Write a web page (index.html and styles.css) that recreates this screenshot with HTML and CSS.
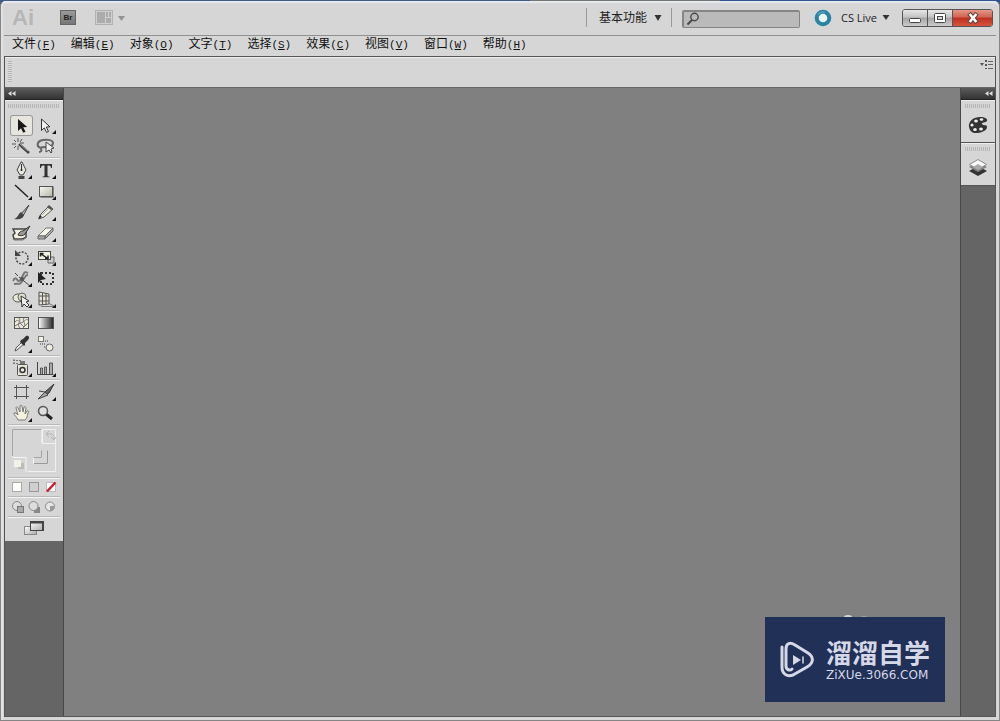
FILE: index.html
```html
<!DOCTYPE html>
<html lang="zh-CN">
<head>
<meta charset="utf-8">
<title>Ai</title>
<link rel="stylesheet" href="styles.css">
</head>
<body>
<div class="desktop">
<div class="window">
  <header class="titlebar">
    <span class="app-name">Ai</span>
    <button class="bridge" type="button" aria-label="Bridge">Br</button>
    <button class="arrange" type="button" aria-label="排列文档">
      <svg width="32" height="16" viewBox="0 0 32 16"><rect x=".5" y=".5" width="17" height="14" fill="#cfcfcf" stroke="#b2b2b2"/><path d="M2 2h8v11H2zM11 2h2v5h-2zM14 2h2v5h-2zM11 8h5v5h-5z" fill="#acacac"/><path d="M23 6h7l-3.500 5z" fill="#939393"/></svg>
    </button>
    <div class="title-right">
      <label class="workspace">
        <select aria-label="工作区"><option>基本功能</option></select>
        <svg width="8" height="6" viewBox="0 0 8 6"><path d="M.5 0h7L4 6z" fill="#333"/></svg>
      </label>
      <label class="search">
        <svg width="14" height="14" viewBox="0 0 14 14" fill="none" stroke="#484848"><circle cx="8.500" cy="5" r="3.700" stroke-width="1.400"/><path d="M6 8L1.500 12.500" stroke-width="2"/></svg>
        <input type="search" aria-label="搜索">
      </label>
      <button class="cslive" type="button">
        <svg width="18" height="18" viewBox="0 0 18 18"><circle cx="9" cy="9" r="6.300" fill="#edf3f5" stroke="#2883a5" stroke-width="4"/><path d="M4 5.500A6 6 0 0 1 11 3.500" fill="none" stroke="#58a6bf" stroke-width="1.500"/></svg>
        <span>CS Live</span>
        <svg width="8" height="5" viewBox="0 0 8 5"><path d="M.5 0h7L4 5z" fill="#333"/></svg>
      </button>
      <div class="controls">
        <button type="button" aria-label="最小化"><svg width="14" height="12" viewBox="0 0 14 12"><rect x="1.500" y="6.500" width="11" height="4" rx="1" fill="#fff" stroke="#444"/></svg></button>
        <button type="button" aria-label="还原"><svg width="14" height="12" viewBox="0 0 14 12"><rect x="1.500" y="1.500" width="11" height="9" rx="1" fill="#fff" stroke="#444"/><rect x="4.500" y="4.500" width="5" height="3" fill="#ddd" stroke="#444"/></svg></button>
        <button class="close" type="button" aria-label="关闭"><svg width="14" height="12" viewBox="0 0 14 12"><path d="M4.500 3l5 6M9.500 3l-5 6" stroke="#674441" stroke-width="4.600" stroke-linecap="square"/><path d="M4.500 3l5 6M9.500 3l-5 6" stroke="#fff" stroke-width="2.600" stroke-linecap="square"/></svg></button>
      </div>
    </div>
  </header>
  <nav class="menubar">
    <button type="button">文件<span>(<u>F</u>)</span></button>
    <button type="button">编辑<span>(<u>E</u>)</span></button>
    <button type="button">对象<span>(<u>O</u>)</span></button>
    <button type="button">文字<span>(<u>T</u>)</span></button>
    <button type="button">选择<span>(<u>S</u>)</span></button>
    <button type="button">效果<span>(<u>C</u>)</span></button>
    <button type="button">视图<span>(<u>V</u>)</span></button>
    <button type="button">窗口<span>(<u>W</u>)</span></button>
    <button type="button">帮助<span>(<u>H</u>)</span></button>
  </nav>
  <div class="client">
    <div class="control-panel">
      <span class="grip-v"></span>
      <button type="button" aria-label="面板菜单"><svg width="14" height="10" viewBox="0 0 14 10"><path d="M0 3h4L2 6zM5 0h2v2H5zM5 4h2v2H5zM5 8h2v1H5z" fill="#555"/><path d="M8 1.500h5M8 4.500h5M8 8.500h5" stroke="#666"/></svg></button>
    </div>
    <div class="workarea">
      <aside class="dock left">
        <button class="collapse" type="button" aria-label="折叠"><svg width="8" height="5" viewBox="0 0 8 5"><path d="M3.500 0v5L0 2.500zM7.500 0v5L4 2.500z" fill="#ddd"/></svg></button>
        <div class="tools">
          <div class="grip-h"></div>
          <div class="group first">
            <button class="tool selected" type="button" aria-label="选择"><svg viewBox="0 0 24 21"><path d="M8 4v12l3-2.800 2.300 4.600 2.200-1-2.300-4.600 4-.2z" fill="#181818"/></svg></button>
            <button class="tool more" type="button" aria-label="直接选择"><svg viewBox="0 0 24 21"><path d="M7.500 4v11.500l2.800-2.600 2.300 4.500 1.900-.9-2.200-4.500 3.600-.2z" fill="#f2f2f2" stroke="#333"/></svg></button>
            <button class="tool" type="button" aria-label="魔棒"><svg viewBox="0 0 24 21"><path d="M9 8l10 9" stroke="#444" stroke-width="2.600"/><path d="M9 7l9 8" stroke="#aaa"/><path d="M8 2v4M8 10v4M2 8h4M10 7h4M4 4l2 2M12 3l-2 3M4 12l2-2" stroke="#555"/></svg></button>
            <button class="tool" type="button" aria-label="套索"><svg viewBox="0 0 24 21"><path d="M7 12c-5-1-4-6 0-7.500 4-1.500 12-1 12 2.500 0 3-4 4-7 4s-6 0-5 2c1 2 0 3-2 3" fill="none" stroke="#666" stroke-width="2"/><path d="M12 6v10l3-2 2 3 1-1-1-3 3-1z" fill="#eee" stroke="#444"/></svg></button>
          </div>
          <div class="group">
            <button class="tool more" type="button" aria-label="钢笔"><svg viewBox="0 0 24 21"><path d="M11 2l-4 8 3 5h3l3-5-4-8z" fill="#e5e5dd" stroke="#444"/><path d="M11.500 4v6" stroke="#333"/><circle cx="11.500" cy="10" r="1" fill="#222"/><path d="M8.500 16h6v3h-6z" fill="#444"/></svg></button>
            <button class="tool more" type="button" aria-label="文字"><svg viewBox="0 0 24 21"><path d="M6 4h12v4h-1c0-2-1-2.500-3.500-2.500V15c0 1 .5 1.500 2 1.500v.8h-7v-.8c1.500 0 2-.5 2-1.500V5.500C8 5.500 7 6 7 8H6z" fill="#333"/></svg></button>
            <button class="tool more" type="button" aria-label="直线段"><svg viewBox="0 0 24 21"><path d="M5 4l13 12" stroke="#222" stroke-width="1.500"/></svg></button>
            <button class="tool more" type="button" aria-label="矩形"><svg viewBox="0 0 24 21"><path d="M6.500 16.500h13v-11" fill="none" stroke="#888"/><rect x="5.500" y="5.500" width="13" height="10" fill="url(#cream)" stroke="#555"/></svg></button>
            <button class="tool" type="button" aria-label="画笔"><svg viewBox="0 0 24 21"><path d="M11 12l8-9-6 11z" fill="#bbb" stroke="#444"/><path d="M11 10l3 3c-1 4-5 5-10 4 4-1 4-5 7-7z" fill="#444"/></svg></button>
            <button class="tool more" type="button" aria-label="铅笔"><svg viewBox="0 0 24 21"><path d="M5 17l2-5 8-8 4 3-9 8z" fill="#efeddc" stroke="#555"/><path d="M4 17l2-4 2 2z" fill="#222"/><path d="M15 3l4 4-2 1-4-3z" fill="#555"/><path d="M8 13l7-7" stroke="#aaa"/></svg></button>
            <button class="tool" type="button" aria-label="斑点画笔"><svg viewBox="0 0 24 21"><path d="M3 6h13v8c-3 3-7 2-12 2l-1-4 2-2z" fill="#f2f0de" stroke="#444" stroke-width="1.500"/><path d="M8 12c1-3 3-4 5-4l7-5-5 8c-2 2-4 2-7 1z" fill="#999" stroke="#333"/><path d="M4 17h9l4-3" fill="none" stroke="#777"/></svg></button>
            <button class="tool more" type="button" aria-label="橡皮擦"><svg viewBox="0 0 24 21"><path d="M4 13l8-8h7l-8 8z" fill="#f4f4e8" stroke="#777"/><path d="M4 13h7v3H4zM11 13l8-8v3l-8 8z" fill="#aaa" stroke="#666"/></svg></button>
          </div>
          <div class="group">
            <button class="tool more" type="button" aria-label="旋转"><svg viewBox="0 0 24 21"><circle cx="12" cy="11" r="6" fill="none" stroke="#444" stroke-width="1.400" stroke-dasharray="2 1.400"/><path d="M5 3v6h6z" fill="#444"/></svg></button>
            <button class="tool more" type="button" aria-label="比例缩放"><svg viewBox="0 0 24 21"><path d="M14 10h6v6h-6z" fill="#ccc" stroke="#666"/><rect x="4.500" y="4.500" width="12" height="8" fill="#f3f1df" stroke="#444"/><path d="M7 7l6 4M6.500 9.500v-3h3M11 11.500h3v-3" stroke="#222" fill="none" stroke-width="1.500"/></svg></button>
            <button class="tool more" type="button" aria-label="宽度"><svg viewBox="0 0 24 21"><path d="M3 13c4-8 4 5 8-2s3-8 7-6M4 16c6-1 5 2 9-4s3-5 5-5" stroke="#777" fill="none" stroke-width="2"/><path d="M9 9l11 9M5 5l3 3" stroke="#444"/><circle cx="12" cy="11" r="2" fill="#555"/></svg></button>
            <button class="tool" type="button" aria-label="自由变换"><svg viewBox="0 0 24 21"><rect x="7" y="5" width="12" height="11" fill="none" stroke="#333" stroke-width="2" stroke-dasharray="2 2"/><path d="M4 4v11l3-3 5-1z" fill="#222"/></svg></button>
            <button class="tool more" type="button" aria-label="形状生成器"><svg viewBox="0 0 24 21"><ellipse cx="8" cy="9" rx="5" ry="4" fill="#e8e8da" stroke="#555"/><circle cx="12" cy="8" r="4" fill="#ddddcf" stroke="#666"/><path d="M11 7l1 11 2-3 3 3 2-2-3-3 3-1z" fill="#eee" stroke="#333"/></svg></button>
            <button class="tool more" type="button" aria-label="透视网格"><svg viewBox="0 0 24 21"><path d="M5 3l10 2v10L5 16zM5 7h10M5 12h10M8.500 4v12M12 4v12" fill="#e6e3ce" stroke="#555"/><path d="M7 17.500h13M14 14l6 3" stroke="#777"/></svg></button>
          </div>
          <div class="group">
            <button class="tool" type="button" aria-label="网格"><svg viewBox="0 0 24 21"><rect x="4.500" y="4.500" width="14" height="11" fill="#edead6" stroke="#555"/><path d="M5 9c4-5 4 3 8 0s3-3 5-2M9 5c3 3-3 6 1 10M14 5c-3 3 4 6-1 10M5 13l5-3 4 4 4-4" fill="none" stroke="#777"/></svg></button>
            <button class="tool" type="button" aria-label="渐变"><svg viewBox="0 0 24 21"><rect x="4.500" y="4.500" width="15" height="11" fill="url(#ramp)" stroke="#555"/></svg></button>
            <button class="tool more" type="button" aria-label="吸管"><svg viewBox="0 0 24 21"><path d="M5 17l1-3 7-7 2 2-8 7z" fill="#eee" stroke="#555"/><path d="M11 6l2-1 3-3c3-1 4 2 2 4l-3 3 0 2-1 1-4-4z" fill="#333"/></svg></button>
            <button class="tool" type="button" aria-label="混合"><svg viewBox="0 0 24 21"><rect x="4.500" y="2.500" width="5" height="5" fill="#f3f1df" stroke="#777"/><circle cx="15.500" cy="13.500" r="3.500" fill="#f0eee0" stroke="#666"/><path d="M6 10h6M10 13h3M11 7h4" stroke="#888" stroke-width="2" stroke-dasharray="1 1"/></svg></button>
          </div>
          <div class="group">
            <button class="tool more" type="button" aria-label="符号喷枪"><svg viewBox="0 0 24 21"><path d="M3 2.500h8M3 5.500h5M4 1v6" stroke="#777" stroke-dasharray="2 1"/><path d="M10 3h5v3h-5z" fill="#777"/><rect x="7.500" y="6.500" width="10" height="11" rx="1" fill="#e6e4d6" stroke="#555"/><circle cx="12.500" cy="12" r="2.500" fill="#eee" stroke="#333" stroke-width="1.500"/></svg></button>
            <button class="tool more" type="button" aria-label="柱形图"><svg viewBox="0 0 24 21"><path d="M3.500 4v12.500h16" fill="none" stroke="#444"/><path d="M6.500 16v-6h2v6M10.500 16V9h2v7M15.500 16V5h3v11" fill="#aaa" stroke="#555"/></svg></button>
          </div>
          <div class="group">
            <button class="tool" type="button" aria-label="画板"><svg viewBox="0 0 24 21"><path d="M6.500 3v14M16.500 3v14M4 5.500h15M4 14.500h15" stroke="#555"/></svg></button>
            <button class="tool more" type="button" aria-label="切片"><svg viewBox="0 0 24 21"><path d="M11 10l9-8-5 9-2 1z" fill="#666" stroke="#333"/><path d="M4 17l7-7 3 3z" fill="#aaa" stroke="#444"/><path d="M5 9l6 1" stroke="#444"/></svg></button>
            <button class="tool more" type="button" aria-label="抓手"><svg viewBox="0 0 24 21"><path d="M8 17c-1-3-5-6-4-7s3 1 4 2L6 5c0-2 2-1 2 0l2 4V3c0-1 2-1 2 0l1 6 1-5c1-1 2 0 2 1l-1 6 2-3c2-1 2 1 1 2-1 4-1 5-3 7z" fill="#f4f1df" stroke="#777"/></svg></button>
            <button class="tool" type="button" aria-label="缩放"><svg viewBox="0 0 24 21"><path d="M12 11l6 5" stroke="#222" stroke-width="3"/><circle cx="9" cy="8" r="4.500" fill="#dedede" stroke="#555" stroke-width="1.500"/></svg></button>
          </div>
          <div class="group swatch">
            <svg width="46" height="45" viewBox="0 0 46 45"><path d="M1.500 1.500h43v42h-28M1.500 29V1.500h30v14h13" fill="none" stroke="#f0f0f0"/><path d="M1.500 28V1.500h29M30.500 22.500v7h-8" fill="none" stroke="#a5a5a5"/><path d="M36.500 22.500v13h-14v-6M2 29.500h13v14M31 2v13" fill="none" stroke="#f5f5f5"/><path d="M36.500 22.500v13H23" fill="none" stroke="#999"/><path d="M36 6h3c3 0 4 1 4 5M38 3l-3 3 3 3M40 9l3 3 2-3" fill="none" stroke="#b5b5b5"/><path d="M7 35h6v6H7z" fill="#bbb"/><path d="M3 32h7v7H3z" fill="#f4f2e6"/></svg>
          </div>
          <div class="group modes">
            <button type="button" aria-label="颜色"><svg width="11" height="11" viewBox="0 0 11 11"><rect x=".5" y=".5" width="9" height="9" fill="#fffffa" stroke="#aaa"/></svg></button>
            <button type="button" aria-label="渐变填色"><svg width="11" height="11" viewBox="0 0 11 11"><rect x=".5" y=".5" width="9" height="9" fill="#cfcfcf" stroke="#999"/></svg></button>
            <button type="button" aria-label="无"><svg width="11" height="11" viewBox="0 0 11 11"><rect x=".5" y=".5" width="9" height="9" fill="#fff" stroke="#bbb"/><path d="M1 9.500l8.500-9" stroke="#c81f32" stroke-width="2.500"/></svg></button>
          </div>
          <div class="group modes">
            <button type="button" aria-label="正常绘图"><svg width="13" height="12" viewBox="0 0 13 12"><circle cx="5" cy="5" r="4.500" fill="#ddd" stroke="#888"/><rect x="5.500" y="5.500" width="6" height="6" fill="#aaa" stroke="#777"/></svg></button>
            <button type="button" aria-label="背面绘图"><svg width="13" height="12" viewBox="0 0 13 12"><path d="M6 6h6v6H6z" fill="#888"/><circle cx="5.500" cy="5" r="4.500" fill="#ddd" stroke="#888"/></svg></button>
            <button type="button" aria-label="内部绘图"><svg width="13" height="12" viewBox="0 0 13 12"><circle cx="6" cy="5.500" r="4.500" fill="#e5e5e5" stroke="#888"/><path d="M6 5h4v3l-2 2H6z" fill="#999"/></svg></button>
          </div>
          <div class="group screen">
            <button type="button" aria-label="屏幕模式"><svg width="22" height="17" viewBox="0 0 22 17"><rect x="1.500" y="6.500" width="12" height="8" fill="url(#grey)" stroke="#888"/><rect x="7.500" y="1.500" width="13" height="9" fill="url(#grey)" stroke="#444"/><path d="M8 2.500h12M20 2v9" stroke="#444" stroke-width="2"/></svg></button>
          </div>
        </div>
      </aside>
      <main class="canvas"></main>
      <aside class="dock right">
        <button class="collapse" type="button" aria-label="展开面板"><svg width="8" height="5" viewBox="0 0 8 5"><path d="M3.500 0v5L0 2.500zM7.500 0v5L4 2.500z" fill="#ddd"/></svg></button>
        <div class="panel-tab"><div class="grip-h"></div><button type="button" aria-label="颜色面板"><svg width="20" height="18" viewBox="0 0 20 18"><path d="M1 11C0 5 6 1 12 1c5 0 8 2 7 4-1 2-6 1-5 3s5 0 5 3c0 4-7 6-11 6-4 0-6-2-7-6z" fill="#333"/><ellipse cx="8" cy="5" rx="1.900" ry="1.500" fill="#eee"/><ellipse cx="13.500" cy="3.500" rx="1.800" ry="1.300" fill="#eee"/><ellipse cx="4" cy="9" rx="1.600" ry="1.500" fill="#eee"/><ellipse cx="7" cy="13.500" rx="1.800" ry="1.500" fill="#eee"/><ellipse cx="13" cy="13" rx="1.900" ry="1.500" fill="#eee"/></svg></button></div>
        <div class="panel-tab"><div class="grip-h"></div><button type="button" aria-label="图层面板"><svg width="20" height="18" viewBox="0 0 20 18"><path d="M1 12l9-5 9 5-9 5z" fill="#333"/><path d="M1 8l9-5 9 5-9 5z" fill="#858585"/><path d="M1.500 5.500l8.500-5 8.500 5-8.500 5z" fill="#f8f8f8" stroke="#888"/><path d="M5 8l5-3 5 3-5 3z" fill="#aaa"/></svg></button></div>
      </aside>
    </div>
  </div>
</div>
<div class="watermark">
  <svg class="specks" width="26" height="4" viewBox="0 0 26 4"><ellipse cx="6" cy="4" rx="4" ry="2" fill="#d5d5d5"/><ellipse cx="22" cy="4" rx="3" ry="1" fill="#a5a5a5"/></svg>
  <svg width="34" height="38" viewBox="0 0 34 38" fill="none" stroke="#d5d8e6" stroke-linecap="round" stroke-linejoin="round"><path d="M2 6v20c0 7 5 10 11 8l14-8c7-4 7-10 1-14L15 4C10 1 6 2 6 8v17c0 4 4 5 6 3" stroke-width="3"/><path d="M13 14v10l8-5z" fill="#d5d8e6" stroke="none"/><path d="M23 16v6" stroke-width="1.500"/></svg>
  <div class="brand"><strong>溜溜自学</strong><span>ZiXUe.3066.COM</span></div>
</div>
</div>
<svg class="defs" width="0" height="0" aria-hidden="true"><defs><linearGradient id="cream" x1="0" y1="0" x2="1" y2="1"><stop offset="0" stop-color="#fbfbf5"/><stop offset="1" stop-color="#b5b5a8"/></linearGradient><linearGradient id="grey" x1="0" y1="0" x2="1" y2="1"><stop offset="0" stop-color="#fff"/><stop offset="1" stop-color="#aaa"/></linearGradient><linearGradient id="ramp"><stop offset="0" stop-color="#fff"/><stop offset="1" stop-color="#222"/></linearGradient></defs></svg>
</body>
</html>
```
FILE: styles.css
```css
* { box-sizing: border-box; }
body { margin: 0; font-family: "Liberation Sans", "Noto Sans CJK SC", sans-serif; font-size: 12px; color: #222; }
button, select, input { margin: 0; padding: 0; border: 0; background: none; font: inherit; color: inherit; }
svg { display: block; flex: none; }
.defs { position: absolute; }

.desktop { position: relative; height: 100vh; background: linear-gradient(90deg, #3d5d85 53%, #74776f 53%, #74776f 72%, #2e5590 72%); }
.window { height: 100%; display: flex; flex-direction: column; padding: 0 3px 3px; background: #d6d6d6; border: 1px solid #858585; border-top-color: transparent; background-clip: padding-box; border-radius: 6px 6px 0 0; box-shadow: inset 0 2px 1px #e6eaf0, inset 2px 0 1px #e2e2e2; }

.titlebar { display: flex; align-items: center; height: 35px; padding: 0 3px 1px 8px; border-bottom: 1px solid #909090; }
.app-name { width: 48px; font-size: 22px; line-height: 24px; font-weight: bold; color: #b6b6b6; }
.bridge { width: 16px; height: 15px; margin-right: 19px; background: linear-gradient(#999, #777); border: 1px solid #666; font-size: 8px; line-height: 12px; font-weight: bold; }
.title-right { display: flex; align-items: center; margin-left: auto; }
.workspace { display: flex; align-items: center; gap: 4px; height: 19px; padding: 0 9px 0 12px; border: 1px solid #999; border-width: 0 1px; }
.workspace select { width: 51px; height: 18px; appearance: none; }
.search { display: flex; align-items: center; width: 118px; height: 18px; margin: 2px 14px 0 10px; padding-left: 2px; background: #bababa; border: 2px solid #858585; border-radius: 2px; border-width: 2px 1px 1px 2px; }
.search input { width: 90px; outline: 0; }
.cslive { display: flex; align-items: center; font-family: "Open Sans", sans-serif; font-size: 11px; }
.cslive span { margin: 0 5px 0 9px; }
.controls { display: flex; margin-left: 12px; border: 1px solid #555; border-radius: 3px; overflow: hidden; }
.controls button { display: flex; align-items: center; justify-content: center; width: 25px; height: 16px; border-right: 1px solid #555; background: linear-gradient(#e6e6e6, #c3c3c3 45%, #a3a3a3 50%, #ccc); }
.controls .close { width: 39px; border: 0; background: linear-gradient(#e59787, #d26250 45%, #bd2f20 50%, #d7543c); }

.menubar { display: flex; align-items: center; gap: 15px; height: 20px; padding: 0 8px 3px; }
.menubar button { line-height: 16px; white-space: nowrap; color: #111; }
.menubar span { font-family: "Liberation Mono", monospace; font-size: 11px; }

.client { flex: 1; display: flex; flex-direction: column; min-height: 0; border: 1px solid #555; }
.control-panel { display: flex; align-items: flex-start; justify-content: space-between; height: 31px; padding: 2px 1px 0 3px; border-top: 1px solid #eee; border-bottom: 1px solid #666; }
.grip-v { width: 4px; height: 22px; margin-top: 1px; background: repeating-linear-gradient(#b5b5b5 0 1px, #ddd 1px 2px); }
.workarea { flex: 1; display: flex; min-height: 0; }
.canvas { flex: 1; background: #808080; }
.dock { background: #656565; }
.left { width: 59px; border-right: 1px solid #484848; }
.right { width: 35px; border-left: 1px solid #484848; }
.collapse { display: flex; align-items: center; width: 100%; height: 12px; padding: 0 3px; background: linear-gradient(#5b5b5b, #333); border-bottom: 1px solid #222; }
.right .collapse { justify-content: flex-end; padding-right: 2px; }
.grip-h { height: 4px; background: repeating-linear-gradient(90deg, #b5b5b5 0 1px, #d6d6d6 1px 2px); }

.tools { padding: 3px 3px 0; background: #d6d6d6; border-top: 1px solid #f0f0f0; }
.group { display: grid; grid-template-columns: 24px 24px; padding: 1px 2px 0; border-top: 1px solid #f4f4f4; border-bottom: 1px solid #b9b9b9; }
.group.first { padding-top: 7px; border-top: 0; }
.tool { position: relative; height: 21px; }
.tool svg { width: 24px; height: 21px; }
.selected { width: 23px; background: #e6e6df; box-shadow: inset 0 0 0 1px #999; border-radius: 3px; }
.more::after { content: ""; position: absolute; right: 2px; bottom: 2px; border: 2px solid #111; border-top-color: transparent; border-left-color: transparent; }
.group.swatch { display: block; padding: 2px 3px 4px; }
.group.modes { display: flex; justify-content: space-between; padding: 3px 3px 3px 4px; }
.group.screen { display: flex; justify-content: center; padding: 2px 0 4px; border-bottom: 0; }

.panel-tab { height: 43px; padding: 3px 4px 0; background: #d6d6d6; border-bottom: 1px solid #555; border-top: 1px solid #eee; }
.panel-tab button { display: block; margin: 8px auto 0; }

.watermark { position: absolute; right: 55px; bottom: 19px; display: flex; align-items: center; gap: 12px; width: 180px; height: 85px; padding-left: 15px; background: #213057; color: #d5d8e6; }
.specks { position: absolute; left: 77px; top: -4px; }
.brand { display: flex; flex-direction: column; white-space: nowrap; }
.brand strong { font-size: 26px; line-height: 30px; font-weight: 700; font-family: "Liberation Sans", "Noto Sans CJK SC", sans-serif; }
.brand span { font-family: "DejaVu Sans", sans-serif; font-size: 12px; line-height: 12px; }
```
